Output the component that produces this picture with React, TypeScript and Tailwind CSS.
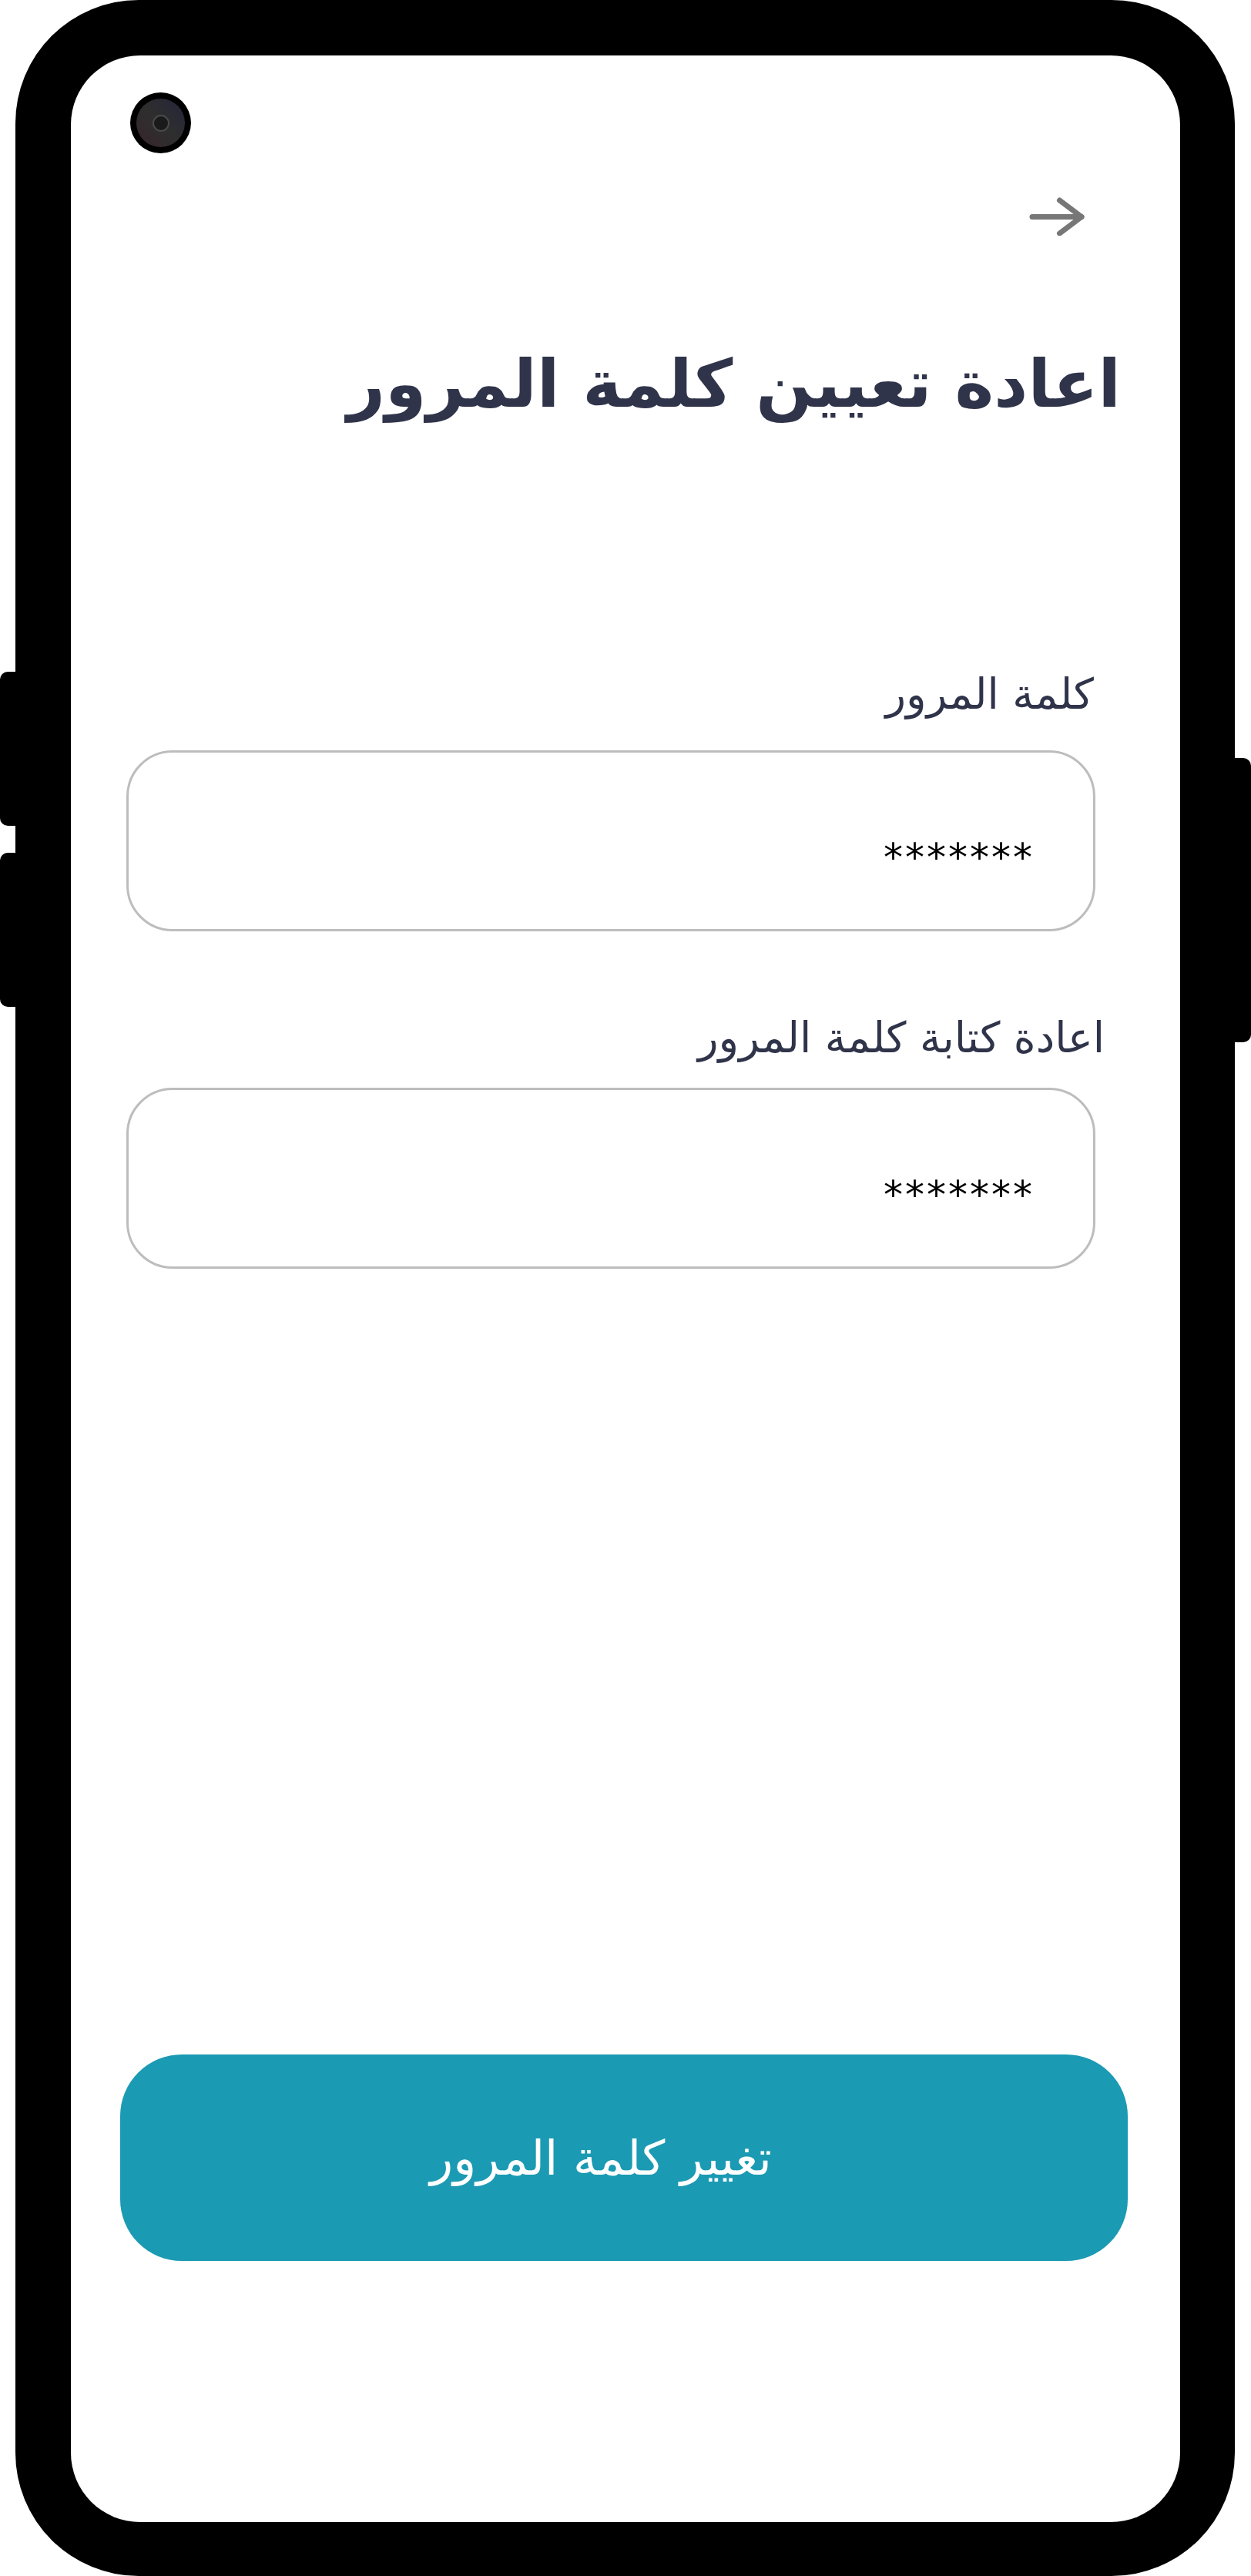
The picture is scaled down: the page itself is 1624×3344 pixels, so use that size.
export default function App() {
  return (
    <div className="relative h-[3344px] w-[1624px] bg-white font-['DejaVu_Sans',sans-serif]">
      {/* side keys */}
      <div className="absolute left-0 top-[872px] h-[200px] w-[24px] rounded-l-[10px] bg-black" />
      <div className="absolute left-0 top-[1107px] h-[200px] w-[24px] rounded-l-[10px] bg-black" />
      <div className="absolute right-0 top-[984px] h-[369px] w-[24px] rounded-r-[10px] bg-black" />

      <div className="ml-[20px] mr-[21px] h-full rounded-[160px] bg-black pb-[70px] pl-[72px] pr-[71px] pt-[72px]">
        <div className="relative flex h-full flex-col rounded-[90px] bg-white">
          {/* camera */}
          <div className="absolute left-[77px] top-[48px] flex h-[79px] w-[79px] items-center justify-center rounded-full bg-black">
            <div className="flex h-[63px] w-[63px] items-center justify-center rounded-full bg-gradient-to-bl from-[#25253a] via-[#2e2e2e] to-[#36252c]">
              <div className="h-[22px] w-[22px] rounded-full border-2 border-[#4a4a4a] bg-[#1a1a1a]" />
            </div>
          </div>

          <div className="flex justify-end pr-[124px] pt-[184px]">
            <svg width="72" height="50" viewBox="0 0 72 50" fill="none" stroke="#777777" strokeWidth="7" strokeLinecap="round" strokeLinejoin="round">
              <path d="M4 25.5H68" />
              <path d="M39.5 4L68 25.5L39.5 47" />
            </svg>
          </div>

          <h1 dir="rtl" className="mt-[149px] pr-[77px] text-right text-[86px] font-bold leading-none text-[#30344a]">
            اعادة تعيين كلمة المرور
          </h1>

          <label dir="rtl" className="mt-[333px] pr-[112px] text-right text-[55px] leading-none text-[#30344a]">
            كلمة المرور
          </label>
          <div className="ml-[72px] mr-[110px] mt-[45px] flex h-[235px] items-center justify-end rounded-[60px] border-[3px] border-[#bdbdbd] pr-[76px] pt-[42px]">
            <span className="text-[50px] leading-none tracking-[3px] text-black">*******</span>
          </div>

          <label dir="rtl" className="mt-[111px] pr-[98px] text-right text-[55px] leading-none text-[#30344a]">
            اعادة كتابة كلمة المرور
          </label>
          <div className="ml-[72px] mr-[110px] mt-[37px] flex h-[235px] items-center justify-end rounded-[60px] border-[3px] border-[#bdbdbd] pr-[76px] pt-[42px]">
            <span className="text-[50px] leading-none tracking-[3px] text-black">*******</span>
          </div>

          <button className="ml-[64px] mr-[68px] mt-[1020px] flex h-[268px] items-center justify-center rounded-[80px] bg-[#1b9ab3] pr-[60px] text-[62px] text-white">
            <span dir="rtl">تغيير كلمة المرور</span>
          </button>
        </div>
      </div>
    </div>
  );
}
